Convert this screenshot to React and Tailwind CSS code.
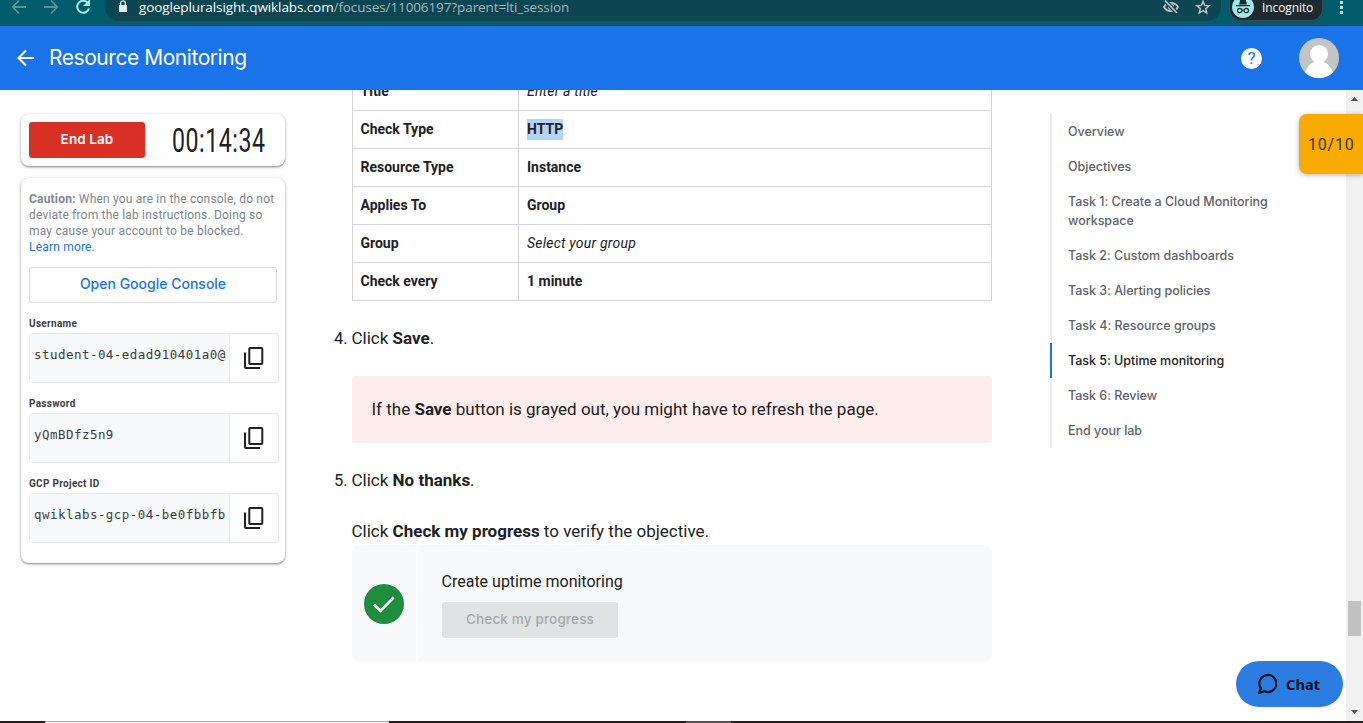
function CopyIcon() {
  return (
    <svg width="24" height="24" viewBox="0 0 24 24" fill="none" stroke="#202124" strokeWidth="2">
      <rect x="7.300" y="2" width="13" height="16" rx="0.800" />
      <path d="M3 6.500V21.200Q3 22 3.800 22H18" />
    </svg>
  );
}

function Field({ label, value }) {
  return (
    <div className="flex h-20 flex-col">
      <div className="h-[18px] text-[10px] leading-[18px] font-bold tracking-[0.3px] text-[#3c4043]">{label}</div>
      <div className="flex h-[50px] w-[250px] rounded-[3px] border border-[#e8eaed]">
        <div className="w-[200px] overflow-hidden border-r border-[#e8eaed] bg-[#f8f9fb] pt-[13px] pl-[4px] font-['DejaVu_Sans_Mono',monospace] text-[12.5px] leading-[16px] tracking-[0.46px] whitespace-nowrap text-[#3c4043]">
          {value}
        </div>
        <div className="flex flex-1 items-center justify-center">
          <CopyIcon />
        </div>
      </div>
    </div>
  );
}

const rows = [
  ["Title", <i className="font-normal tracking-[0.2px]">Enter a title</i>],
  ["Check Type", <span className="bg-[#b3d4fc] pt-[2px] pb-[3px]">HTTP</span>],
  ["Resource Type", "Instance"],
  ["Applies To", "Group"],
  ["Group", <i className="font-normal tracking-[0.22px]">Select your group</i>],
  ["Check every", "1 minute"],
];

const toc = [
  "Overview",
  "Objectives",
  "Task 1: Create a Cloud Monitoring workspace",
  "Task 2: Custom dashboards",
  "Task 3: Alerting policies",
  "Task 4: Resource groups",
  "Task 5: Uptime monitoring",
  "Task 6: Review",
  "End your lab",
];

function BrowserBar() {
  return (
    <div className="flex h-[26px] shrink-0 items-start border-b border-[#04434e] bg-[#015b6b] font-['Open_Sans',sans-serif]">
      <svg className="shrink-0" width="105" height="25" viewBox="0 0 105 25" fill="none" strokeWidth="1.8">
        <path d="M26 7H13M19 0.500L12.800 7L19 13.500" stroke="#4e96a2" />
        <path d="M44 7H57M51 0.500L57.200 7L51 13.500" stroke="#4e96a2" />
        <path d="M87.500 2.500A6 6 0 1 0 89 8.500" stroke="#a4eef0" strokeWidth="2" />
        <path d="M90 -1V6H83Z" fill="#a4eef0" />
      </svg>
      <div className="flex h-[21px] w-[1116px] shrink-0 items-start rounded-b-[14px] bg-[#0d4652]">
        <svg className="ml-[13px] shrink-0" width="12" height="14" viewBox="0 0 12 14">
          <path d="M1 5h8v7H1z" fill="#e8eaed" />
          <path d="M2.700 5V3.200a2.300 2.300 0 0 1 4.600 0V5" fill="none" stroke="#e8eaed" strokeWidth="1.300" />
        </svg>
        <div className="ml-[9px] h-4 text-[13.5px] leading-[15px] tracking-[-0.1px] whitespace-nowrap text-[#9fb8bd]">
          <span className="text-white">googlepluralsight.qwiklabs.com</span>/focuses/11006197?parent=lti_session
        </div>
        <div className="flex-1" />
        <svg width="60" height="16" viewBox="0 0 60 16" fill="none" stroke="#c3c5c7" strokeWidth="1.700">
          <path d="M3 7C6 1.500 14 1.500 17 7C14 12.500 6 12.500 3 7Z" />
          <circle cx="10" cy="7" r="2.300" />
          <path d="M4 0.500L16 13" stroke="#0d4652" strokeWidth="4" />
          <path d="M4 0.500L16 13" />
          <path d="M42 1.200l1.700 4.200 4.500.3-3.500 2.900 1.100 4.400-3.800-2.400-3.800 2.400 1.100-4.400-3.500-2.900 4.500-.3z" strokeWidth="1.400" />
        </svg>
      </div>
      <div className="ml-[8px] flex h-[21px] w-[94px] items-start rounded-b-[12px] border-x border-b border-[#3a4a50] bg-[#1d2b30]">
        <svg className="ml-[2px] shrink-0" width="22" height="19" viewBox="0 0 22 19">
          <circle cx="11" cy="7" r="11" fill="#a0eaea" />
          <path d="M7 4.500L8.200 0H13.800L15 4.500ZM4 5h14v1.300H4z" fill="#1d2b30" />
          <g fill="none" stroke="#1d2b30" strokeWidth="1.200">
            <circle cx="7.700" cy="10.500" r="2.200" />
            <circle cx="14.300" cy="10.500" r="2.200" />
            <path d="M9.900 10.200h2.200" />
          </g>
        </svg>
        <span className="ml-[8px] text-[12px] leading-[15px] tracking-[-0.1px] text-white">Incognito</span>
      </div>
      <svg className="ml-[13px]" width="10" height="16" viewBox="0 0 10 16" fill="#a4eef0">
        <path d="M4 1h3v3H4zM4 6h3v3H4zM4 11h3v3H4z" />
      </svg>
    </div>
  );
}

export default function App() {
  return (
    <div className="relative flex h-[723px] w-[1363px] flex-col overflow-hidden bg-white font-['Roboto',sans-serif] text-[#202124]">
      <BrowserBar />
      <header className="flex h-16 shrink-0 items-center bg-[#1a73e8] font-['Inter',sans-serif] text-white">
        <svg className="ml-[16px]" width="20" height="20" viewBox="0 0 20 20" fill="none" stroke="white" strokeWidth="2">
          <path d="M18 10H3M10 2.500L2.500 10L10 17.500" />
        </svg>
        <h1 className="ml-[13px] text-[21px] tracking-[-0.45px]">Resource Monitoring</h1>
        <div className="flex-1" />
        <div className="mr-[37px] flex size-[21px] items-center justify-center rounded-full bg-white font-['Roboto',sans-serif] text-[17px] leading-none text-[#1a73e8]">?</div>
        <svg className="mr-6" width="40" height="40" viewBox="0 0 40 40">
          <defs>
            <clipPath id="avatar">
              <circle cx="20" cy="20" r="20" />
            </clipPath>
          </defs>
          <g clipPath="url(#avatar)">
            <path d="M0 0h40v40H0z" fill="#c4c4c4" />
            <circle cx="20" cy="16" r="9" fill="white" />
            <path d="M5 40C6 30 12 24 17 23.500H23C28 24 34 30 35 40Z" fill="white" />
          </g>
        </svg>
      </header>

      <div className="flex min-h-0 flex-1">
        <aside className="flex w-[306px] shrink-0 flex-col pt-6 pl-[21px]">
          <div className="flex h-[52px] w-[264px] items-center rounded-lg pl-2 shadow-[0_1px_2px_rgba(60,64,67,0.55),0_1px_4px_rgba(60,64,67,0.18)]">
            <button className="h-9 w-[116px] rounded-[3px] bg-[#d93025] pb-px font-['Inter',sans-serif] text-[13.5px] font-semibold tracking-[0.1px] text-white">End Lab</button>
            <div className="ml-[27px] flex w-[93px] text-[34px] leading-[52px]">
              <span className="origin-left scale-x-[0.68] tracking-[0.8px]">00:14:34</span>
            </div>
          </div>
          <div className="mt-3 h-[385px] w-[264px] rounded-lg pt-[13px] pl-2 shadow-[0_1px_2px_rgba(60,64,67,0.55),0_1px_4px_rgba(60,64,67,0.18)]">
            <p className="h-[64px] text-[12px] leading-4 tracking-[0.19px] whitespace-nowrap text-[#80868b]">
              <b>Caution:</b> When you are in the console, do not
              <br />
              deviate from the lab instructions. Doing so
              <br />
              may cause your account to be blocked.
              <br />
              <span className="text-[#1a73e8]">Learn more.</span>
            </p>
            <button className="mt-3 mb-[12px] h-9 w-[248px] rounded-[3px] border border-[#dadce0] pb-[3px] font-['Inter',sans-serif] text-[14px] font-medium text-[#1a73e8]">
              Open Google Console
            </button>
            <Field label="Username" value="student-04-edad910401a0@" />
            <Field label="Password" value="yQmBDfz5n9" />
            <Field label="GCP Project ID" value="qwiklabs-gcp-04-be0fbbfb" />
          </div>
        </aside>

        <main className="flex w-[686px] shrink-0 flex-col pl-[46px]">
          <div className="-mt-[18px] h-[229px] w-[640px] shrink-0 border-x border-b border-[#d4d3da] [clip-path:inset(18px_0_0_0)]">
            {rows.map(([k, v], i) => (
              <div key={i} className="flex h-[38px] border-t border-[#d4d3da] text-[14px] leading-[37px] font-bold">
                <div className="w-[166px] border-r border-[#d4d3da] pl-[7.5px]">{k}</div>
                <div className="pl-2">{v}</div>
              </div>
            ))}
          </div>
          <p className="mt-[25px] -ml-[18px] flex h-6 items-baseline text-[17px] leading-6">
            <span className="w-[17.500px] shrink-0 text-[16.5px]">4.</span>
            <span>
              Click <b>Save</b>.
            </span>
          </p>
          <div className="mt-[26px] h-[67px] w-[640px] shrink-0 rounded-[2px] bg-[#fdeeed] pl-[19.5px] text-[17px] leading-[67px]">
            If the <b>Save</b> button is grayed out, you might have to refresh the page.
          </div>
          <p className="mt-[25px] -ml-[18px] flex h-6 items-baseline text-[17px] leading-6">
            <span className="w-[17.500px] shrink-0 text-[16.5px]">5.</span>
            <span>
              Click <b>No thanks</b>.
            </span>
          </p>
          <p className="mt-[27px] -ml-[0.5px] h-6 text-[17px] leading-6">
            Click <b>Check my progress</b> to verify the objective.
          </p>
          <div className="mt-[2px] flex h-[117px] w-[640px] shrink-0 gap-[2px] overflow-hidden rounded-lg">
            <div className="flex w-16 items-center justify-center bg-[#f8f9fb]">
              <svg width="40" height="40" viewBox="0 0 40 40">
                <circle cx="20" cy="20" r="20" fill="#1e8e3e" />
                <path d="M10 20.500L16.500 26.800L29.500 13.500" fill="none" stroke="white" strokeWidth="2.600" />
              </svg>
            </div>
            <div className="flex flex-1 flex-col bg-[#f8f9fb] pt-[25px] pl-6">
              <div className="-ml-[0.5px] text-[16px] leading-6">Create uptime monitoring</div>
              <button className="mt-2 h-9 w-[176px] rounded-[3px] bg-[#e1e2e4] pb-px font-['Inter',sans-serif] text-[13.5px] font-medium tracking-[0.16px] text-[#a6a8ab]">
                Check my progress
              </button>
            </div>
          </div>
        </main>

        <nav className="ml-[58px] flex w-[240px] shrink-0 flex-col pt-6 font-['Inter',sans-serif] text-[12.5px] leading-[19px] font-medium tracking-[-0.02px] text-[#5f6368]">
          {toc.map((t, i) => (
            <div
              key={t}
              className={
                i === 6
                  ? "border-l-2 border-[#1a73e8] py-2 pl-4 text-[#202124]"
                  : "border-l-2 border-[#e8eaed] py-2 pl-4"
              }
            >
              {t}
            </div>
          ))}
        </nav>
        <div className="flex-1" />
        <div className="flex w-[17px] flex-col items-center bg-[#f1f1f1]">
          <svg width="17" height="17" viewBox="0 0 17 17"><path d="M5 11L8.500 7L12 11Z" fill="#505050" /></svg>
          <div className="mt-[494px] h-[35px] w-[13px] bg-[#c1c1c1]" />
          <div className="flex-1" />
          <svg width="17" height="17" viewBox="0 0 17 17"><path d="M5 6L8.500 10L12 6Z" fill="#505050" /></svg>
        </div>
      </div>

      <div className="flex h-[2px] shrink-0 bg-[#231f20]">
        <div className="ml-[45px] w-[344px] border-x border-t border-[#b4b4b4] bg-[#f0f0f0]" />
        <div className="ml-[297px] w-[45px] bg-[#555354]" />
      </div>

      <div className="absolute top-[114px] right-0 flex h-[60px] w-16 items-center rounded-l-lg bg-[#f9ab00] pt-px pl-[9px] text-[16px] tracking-[0.8px] text-[#3c3016] shadow-[0_1px_5px_rgba(0,0,0,0.3)]">
        10/10
      </div>
      <button className="absolute top-[661px] left-[1236px] flex h-[46px] w-[107px] items-center rounded-full bg-[#2b7de1] pt-px font-['Noto_Sans',sans-serif] text-[14.5px] font-bold text-[#06101f]">
        <svg className="mb-px ml-[21px]" width="20" height="22" viewBox="0 0 20 22" fill="none" stroke="#06101f" strokeWidth="2.200">
          <path d="M2 20L4 15.500A8.500 8.500 0 1 1 7.500 18.300L2 20Z" strokeLinejoin="round" />
        </svg>
        <span className="ml-[9px] tracking-[0.15px]">Chat</span>
      </button>
    </div>
  );
}
